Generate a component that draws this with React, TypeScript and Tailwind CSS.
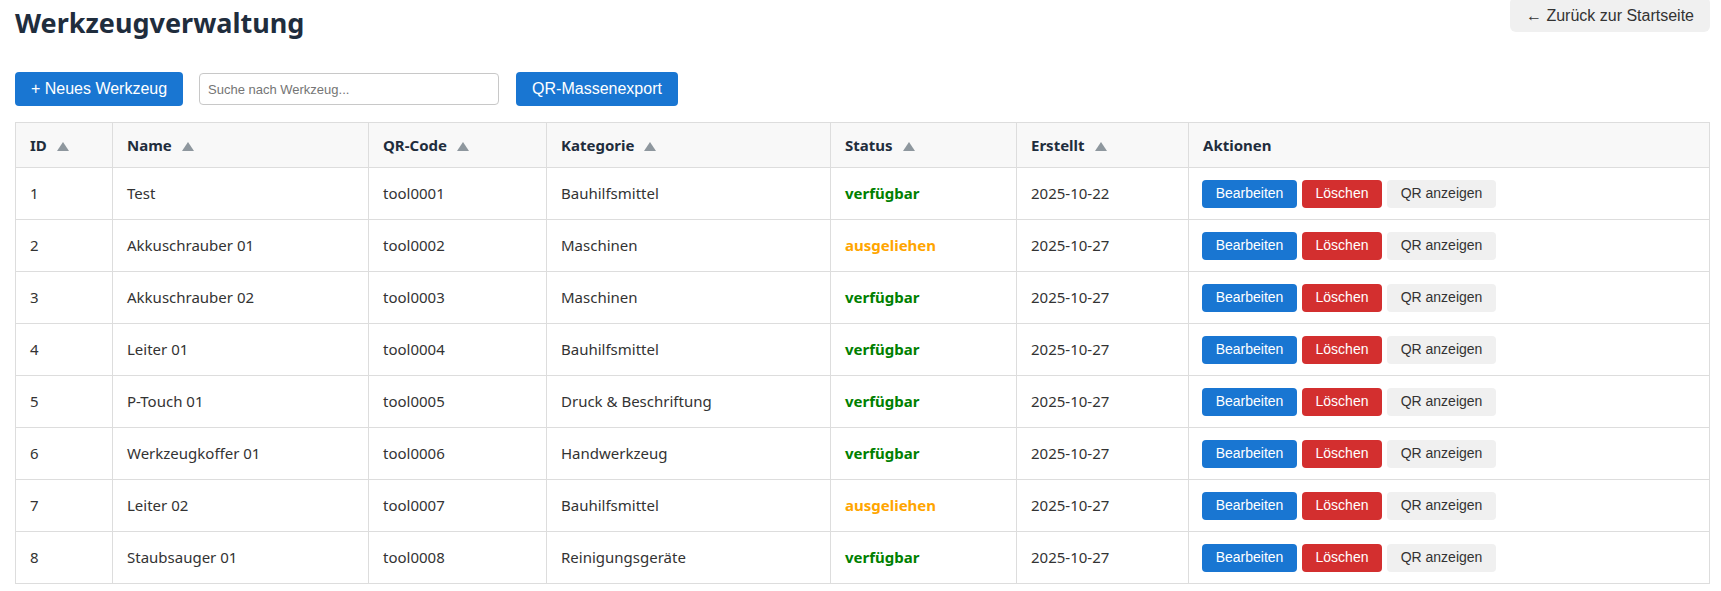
import React from 'react'

type Tool = {
  id: number
  name: string
  code: string
  category: string
  status: 'verfügbar' | 'ausgeliehen'
  created: string
}

const tools: Tool[] = [
  { id: 1, name: 'Test', code: 'tool0001', category: 'Bauhilfsmittel', status: 'verfügbar', created: '2025-10-22' },
  { id: 2, name: 'Akkuschrauber 01', code: 'tool0002', category: 'Maschinen', status: 'ausgeliehen', created: '2025-10-27' },
  { id: 3, name: 'Akkuschrauber 02', code: 'tool0003', category: 'Maschinen', status: 'verfügbar', created: '2025-10-27' },
  { id: 4, name: 'Leiter 01', code: 'tool0004', category: 'Bauhilfsmittel', status: 'verfügbar', created: '2025-10-27' },
  { id: 5, name: 'P-Touch 01', code: 'tool0005', category: 'Druck & Beschriftung', status: 'verfügbar', created: '2025-10-27' },
  { id: 6, name: 'Werkzeugkoffer 01', code: 'tool0006', category: 'Handwerkzeug', status: 'verfügbar', created: '2025-10-27' },
  { id: 7, name: 'Leiter 02', code: 'tool0007', category: 'Bauhilfsmittel', status: 'ausgeliehen', created: '2025-10-27' },
  { id: 8, name: 'Staubsauger 01', code: 'tool0008', category: 'Reinigungsgeräte', status: 'verfügbar', created: '2025-10-27' },
]

const columns = [
  { label: 'ID', width: 'w-[97px]', sort: true },
  { label: 'Name', width: 'w-[256px]', sort: true },
  { label: 'QR-Code', width: 'w-[178px]', sort: true },
  { label: 'Kategorie', width: 'w-[284px]', sort: true },
  { label: 'Status', width: 'w-[186px]', sort: true },
  { label: 'Erstellt', width: 'w-[172px]', sort: true },
  { label: 'Aktionen', width: '', sort: false },
]

function SortArrow() {
  return (
    <svg width="12" height="9" viewBox="0 0 12 9" className="ml-[10px] inline-block align-baseline">
      <path d="M6 0 L12 9 L0 9 Z" fill="#8e979e" />
    </svg>
  )
}

export default function App() {
  return (
    <div
      className="min-h-screen bg-white pl-[15px] pr-[11px] text-[#333]"
      style={{ fontFamily: '"Noto Sans", "Open Sans", sans-serif' }}
    >
      {/* ── Header ─────────────────────────────────── */}
      <div className="flex items-start justify-between">
        <h1 className="mt-[6px] text-[27px] font-bold leading-[34px] text-[#1f2d3d]">Werkzeugverwaltung</h1>
        <button
          className="-mt-[3px] h-[35px] rounded-[6px] bg-[#f0f0f0] px-[16px] pt-[3px] text-[16px] text-[#333]"
          style={{ fontFamily: '"Liberation Sans", Arial, sans-serif' }}
        >
          ← Zurück zur Startseite
        </button>
      </div>

      {/* ── Toolbar ────────────────────────────────── */}
      <div
        className="mt-[32px] flex items-center gap-4"
        style={{ fontFamily: '"Liberation Sans", Arial, sans-serif' }}
      >
        <button className="h-[34px] w-[168px] rounded-[4px] bg-[#1976d2] text-[16px] text-white">
          + Neues Werkzeug
        </button>
        <input
          className="h-[32px] w-[300px] rounded-[4px] border border-[#c8c8c8] px-[8px] text-[13px] text-[#333] outline-none placeholder:text-[#757575]"
          placeholder="Suche nach Werkzeug..."
        />
        <button className="ml-[1px] h-[34px] w-[162px] rounded-[4px] bg-[#1976d2] text-[16px] text-white">
          QR-Massenexport
        </button>
      </div>

      {/* ── Table ──────────────────────────────────── */}
      <table className="mt-[16px] w-full table-fixed border-collapse border border-[#dddddd] text-[15px]">
        <thead>
          <tr className="h-[45px] bg-[#f8f8f8]">
            {columns.map(c => (
              <th
                key={c.label}
                className={`${c.width} border border-[#dddddd] px-[14px] text-left align-middle font-bold text-[#1f2d3d]`}
              >
                {c.label}
                {c.sort && <SortArrow />}
              </th>
            ))}
          </tr>
        </thead>
        <tbody>
          {tools.map(t => (
            <tr key={t.id} className="h-[52px]">
              <td className="border border-[#dddddd] px-[14px] align-middle">{t.id}</td>
              <td className="border border-[#dddddd] px-[14px] align-middle">{t.name}</td>
              <td className="border border-[#dddddd] px-[14px] align-middle">{t.code}</td>
              <td className="border border-[#dddddd] px-[14px] align-middle">{t.category}</td>
              <td
                className={`border border-[#dddddd] px-[14px] align-middle font-bold ${
                  t.status === 'verfügbar' ? 'text-[#008000]' : 'text-[#ffa500]'
                }`}
              >
                {t.status}
              </td>
              <td className="border border-[#dddddd] px-[14px] align-middle">{t.created}</td>
              <td className="border border-[#dddddd] px-[13px] align-middle">
                <div
                  className="flex gap-[5px] text-[14px]"
                  style={{ fontFamily: '"Liberation Sans", Arial, sans-serif' }}
                >
                  <button className="h-[28px] w-[95px] rounded-[4px] bg-[#1976d2] text-white">Bearbeiten</button>
                  <button className="h-[28px] w-[80px] rounded-[4px] bg-[#d32f2f] text-white">Löschen</button>
                  <button className="h-[28px] w-[109px] rounded-[4px] bg-[#f0f0f0] text-[#333]">QR anzeigen</button>
                </div>
              </td>
            </tr>
          ))}
        </tbody>
      </table>
    </div>
  )
}
